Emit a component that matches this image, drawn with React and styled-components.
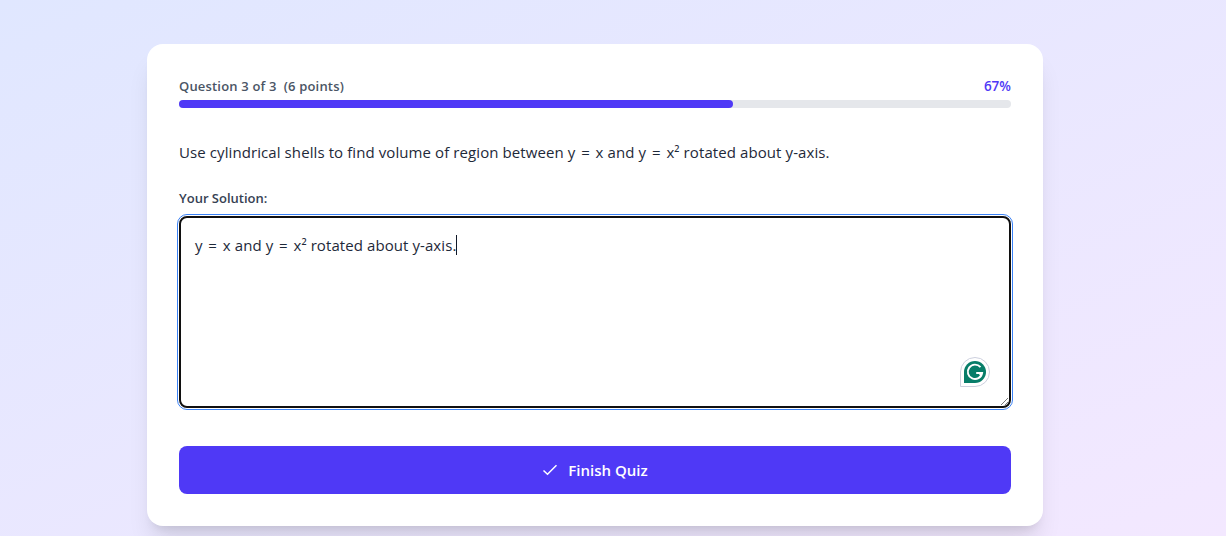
import React from "react";
import styled, { createGlobalStyle } from "styled-components";

const GlobalStyle = createGlobalStyle`
  * { box-sizing: border-box; }
  body {
    margin: 0;
    overflow: hidden;
    font-family: "Segoe UI", "Open Sans", "Noto Sans", sans-serif;
  }
`;

const Page = styled.main`
  height: 536px;
  padding: 44px 36px 0 0;
  background: linear-gradient(to bottom right, #e0e7ff, #f3e8ff);
`;

const Card = styled.section`
  width: 896px;
  height: 482px;
  margin: 0 auto;
  padding: 32px;
  border-radius: 16px;
  background: #fff;
  box-shadow: 0 20px 25px -5px rgba(0, 0, 0, 0.1), 0 8px 10px -6px rgba(0, 0, 0, 0.1);
`;

const ProgressHeader = styled.div`
  display: flex;
  justify-content: space-between;
  height: 24px;
  line-height: 20px;
  font-size: 13px;
  font-weight: 600;
  color: #4a5565;
`;

const Count = styled.span`
  white-space: pre;
  letter-spacing: 0.18px;
`;

const Percent = styled.span`
  font-size: 13.5px;
  font-weight: 550;
  color: #4f39f6;
`;

const Track = styled.div`
  height: 8px;
  border-radius: 8px;
  background: #e5e7eb;
`;

const Fill = styled.div`
  width: ${({ $value }) => $value}%;
  height: 100%;
  border-radius: 8px;
  background: #4f39f6;
`;

const Question = styled.p`
  margin: 31px 0 0;
  height: 27px;
  line-height: 26px;
  font-size: 15px;
  letter-spacing: 0.09px;
  color: #1e2939;
  white-space: nowrap;
`;

const Formula = styled.span`
  word-spacing: 1.8px;
`;

const Label = styled.div`
  margin-top: 22px;
  height: 28px;
  line-height: 20px;
  font-size: 13px;
  font-weight: 600;
  color: #364153;
`;

const Answer = styled.div`
  position: relative;
  height: 192px;
  padding: 15px 14px;
  border: 2px solid #101010;
  border-radius: 8px;
  outline: 1px solid #3b82f6;
  outline-offset: 1px;
  line-height: 24px;
  font-size: 15px;
  letter-spacing: 0.08px;
  color: #1e2939;
  white-space: nowrap;
`;

const Caret = styled.span`
  display: inline-block;
  width: 1px;
  height: 20px;
  vertical-align: -4px;
  background: #101828;
`;

const Assistant = styled.svg`
  position: absolute;
  right: 19px;
  bottom: 19px;
`;

const Grip = styled.svg`
  position: absolute;
  right: 0;
  bottom: 0;
`;

const FinishButton = styled.button`
  display: flex;
  align-items: center;
  justify-content: center;
  gap: 10px;
  width: 100%;
  height: 48px;
  margin-top: 38px;
  padding: 0;
  border: 0;
  border-radius: 8px;
  background: #4f39f6;
  color: #fff;
  font-family: inherit;
  font-size: 15px;
  font-weight: 600;
  line-height: 24px;
`;

export default function App() {
  return (
    <Page>
      <GlobalStyle />
      <Card>
        <ProgressHeader>
          <Count>Question 3 of 3  (6 points)</Count>
          <Percent>67%</Percent>
        </ProgressHeader>
        <Track>
          <Fill $value={66.6} />
        </Track>
        <Question>
          Use cylindrical shells to find volume of region between <Formula>y = x</Formula> and{" "}
          <Formula>y = x²</Formula> rotated about y-axis.
        </Question>
        <Label>Your Solution:</Label>
        <Answer role="textbox" aria-label="Your Solution">
          <Formula>y = x</Formula> and <Formula>y = x²</Formula> rotated about y-axis.<Caret />
          <Assistant width="30" height="30" viewBox="0 0 30 30" fill="none">
            <path d="M.5 29.5V15A14.5 14.5 0 1 1 15 29.5Z" fill="#fff" stroke="#cdd0de" />
            <path d="M4 26V15A11 11 0 1 1 15 26Z" fill="#077d69" />
            <path d="M20.5 10.2A7.2 7.2 0 1 0 22.1 16H16.2M22.2 16L19.7 18.5" stroke="#fff" strokeWidth="1.9" />
          </Assistant>
          <Grip width="9" height="9" viewBox="0 0 9 9" stroke="#555" strokeWidth="0.8">
            <path d="M1 8L8 1M5 8L8 5" />
          </Grip>
        </Answer>
        <FinishButton>
          <svg width="16" height="16" viewBox="0 0 16 16" fill="none" stroke="#fff" strokeWidth="1.5">
            <path d="M1.5 8.5L5.5 12.3L14.5 3.2" />
          </svg>
          <span>Finish Quiz</span>
        </FinishButton>
      </Card>
    </Page>
  );
}
